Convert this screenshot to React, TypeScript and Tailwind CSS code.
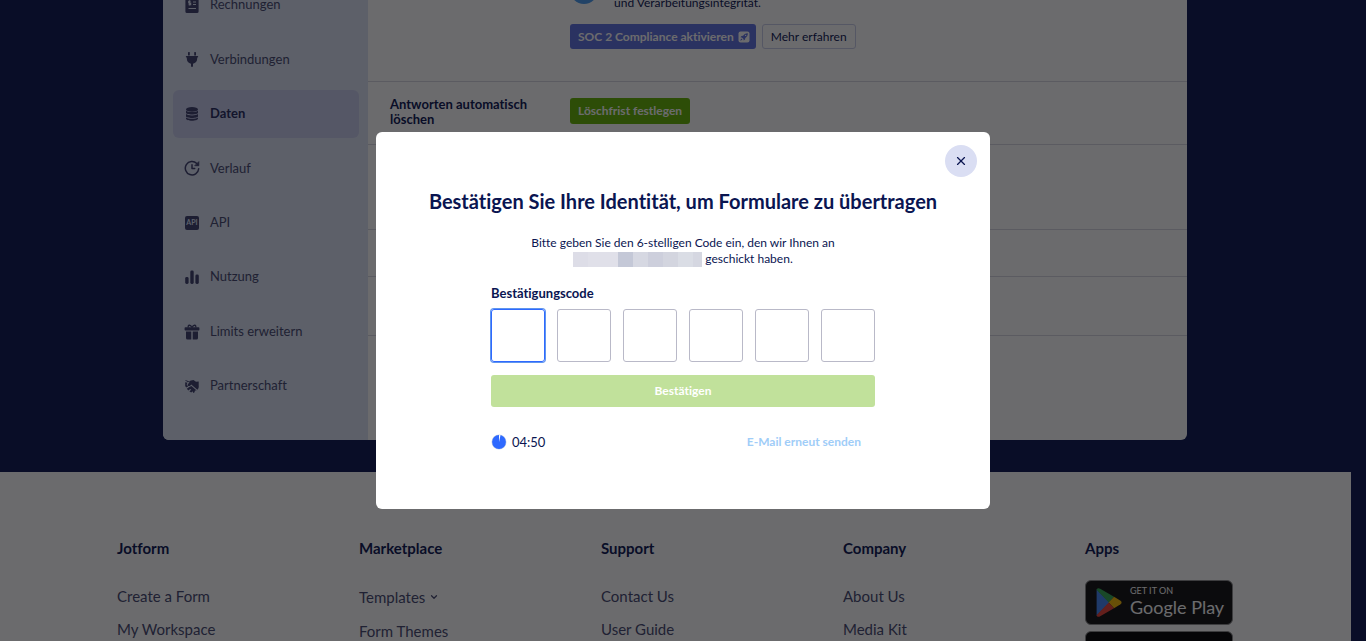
import { useRef, useState, type ReactNode } from 'react'
import { ChevronDown, X } from 'lucide-react'

const navItems: { label: string; icon: ReactNode; active?: boolean }[] = [
  { label: 'Rechnungen', icon: <InvoiceIcon /> },
  { label: 'Verbindungen', icon: <PlugIcon /> },
  { label: 'Daten', icon: <DatabaseIcon />, active: true },
  { label: 'Verlauf', icon: <HistoryIcon /> },
  { label: 'API', icon: <ApiIcon /> },
  { label: 'Nutzung', icon: <UsageIcon /> },
  { label: 'Limits erweitern', icon: <GiftIcon /> },
  { label: 'Partnerschaft', icon: <HandshakeIcon /> },
]

const footerColumns = [
  { title: 'Jotform', links: ['Create a Form', 'My Workspace'] },
  { title: 'Marketplace', links: ['Templates', 'Form Themes'] },
  { title: 'Support', links: ['Contact Us', 'User Guide'] },
  { title: 'Company', links: ['About Us', 'Media Kit'] },
]

const maskColors = ['#dddde7', '#e0e0e9', '#e0e0e9', '#c4c8d7', '#d6d8e2', '#cdcfdc', '#d3d5df', '#dadde5', '#d5d7e1']

function InvoiceIcon() {
  return (
    <svg width="16" height="16" viewBox="0 0 16 16">
      <path fill="currentColor" d="M3 0h10a1.6 1.6 0 0 1 1.6 1.6v12.800A1.6 1.6 0 0 1 13 16H3a1.600 1.600 0 0 1-1.600-1.600V1.600A1.600 1.600 0 0 1 3 0z" />
      <path fill="none" stroke="#dce3f5" strokeWidth="1.100" d="M6.700 4.300H4.700v1.700h2v1.700H4.500M5.600 3.300v5.300M9 5h3M9 7.500h3M4.500 11.500h7.500" />
    </svg>
  )
}

function PlugIcon() {
  return (
    <svg width="16" height="16" viewBox="0 0 16 16" fill="currentColor">
      <rect x="4" y="1" width="1.800" height="3.500" rx=".6" />
      <rect x="10.200" y="1" width="1.800" height="3.500" rx=".6" />
      <path d="M2.500 5h11a.7.7 0 0 1 0 1.400h-.3v1.200c0 2.700-1.700 4.700-4.200 5.200V15a1 1 0 0 1-2 0v-2.200C4.500 12.300 2.800 10.300 2.800 7.600V6.400h-.3a.7.7 0 0 1 0-1.400z" />
    </svg>
  )
}

function DatabaseIcon() {
  return (
    <svg width="16" height="16" viewBox="0 0 16 16" fill="currentColor">
      <ellipse cx="8" cy="3.400" rx="6" ry="2.400" />
      <path d="M2 4.700c1.500 1.700 10.500 1.700 12 0v2.100c0 2.300-12 2.300-12 0z" />
      <path d="M2 8.100c1.500 1.700 10.500 1.700 12 0v2.100c0 2.300-12 2.300-12 0z" />
      <path d="M2 11.500c1.500 1.700 10.500 1.700 12 0v1c0 2.900-12 2.900-12 0z" />
    </svg>
  )
}

function HistoryIcon() {
  return (
    <svg width="16" height="16" viewBox="0 0 16 16" fill="none" stroke="currentColor" strokeWidth="1.500" strokeLinecap="round" strokeLinejoin="round">
      <path d="M12.800 3.500A6.700 6.700 0 1 0 14.700 8.800" />
      <path d="M8 4.800v3.700h2.700" />
      <path fill="currentColor" strokeWidth=".8" d="M14.800 2v3.700h-3.700z" />
    </svg>
  )
}

function ApiIcon() {
  return (
    <svg width="16" height="16" viewBox="0 0 16 16">
      <rect x="1" y="1" width="14" height="14" rx="2" fill="currentColor" />
      <text x="8" y="10.400" textAnchor="middle" fontSize="7" fontWeight="700" fill="#dce3f5">API</text>
    </svg>
  )
}

function UsageIcon() {
  return (
    <svg width="16" height="16" viewBox="0 0 16 16" fill="currentColor">
      <rect x="1.200" y="8" width="3.400" height="7" rx="1.400" />
      <rect x="6.300" y="1.500" width="3.400" height="13.500" rx="1.400" />
      <rect x="11.400" y="5.500" width="3.400" height="9.500" rx="1.400" />
    </svg>
  )
}

function GiftIcon() {
  return (
    <svg width="16" height="16" viewBox="0 0 16 16">
      <path fill="none" stroke="currentColor" strokeWidth="1.300" d="M8 3.500C6.500.2 3.500.8 4.300 3.500M8 3.500C9.500.2 12.500.8 11.700 3.500" />
      <path fill="currentColor" d="M1.400 3.200h13.200a.8.800 0 0 1 .8.800v1.700a.8.800 0 0 1-.8.800H1.400a.8.800 0 0 1-.8-.8V4a.8.800 0 0 1 .8-.8zM2 7.500h5.300v8H3.500A1.500 1.500 0 0 1 2 14zM8.700 7.500H14V14a1.500 1.500 0 0 1-1.500 1.500H8.700z" />
    </svg>
  )
}

function HandshakeIcon() {
  return (
    <svg width="16" height="16" viewBox="0 0 16 16" fill="currentColor">
      <path d="M1.300 2.600 4 4.200l2-.9-2.700 3.900c1 1.300 2.800 1.200 3.900-.7l6.200 5.200c1.300-1.200 1.500-2.700 1.300-4.400V3.500L12 3.800 9.500 2 7 2.500 4.800 3.300 1.300 2z" />
      <path d="M1.200 4.200v4l1.400 1.400 1.700-1.300C2.500 7.600 2.300 6.500 3.500 4.800z" />
      <path d="m5.200 8.900-2.400 1.800 1.500 1.700 1.900-1.500 1.100.8-1.900 1.600 1.800 1.200 1.400-1.300.6 1.800 1.400-.7.300-1.800 1.700.1-5.200-4.600z" />
    </svg>
  )
}

function RocketBadge() {
  return (
    <svg width="12" height="12" viewBox="0 0 12 12">
      <rect x=".5" y=".5" width="11" height="11" rx="2" fill="#fff" />
      <path fill="#5d70e0" d="M9.800 2.200c-2.200-.1-3.600.8-4.700 2.500L3.500 5 2.400 6.300l1.500.2 1.600 1.600.2 1.500L7 8.500l.3-1.600c1.700-1.100 2.600-2.500 2.500-4.700zM3.200 7.500l-1 2.300 2.300-1z" />
      <circle cx="7.600" cy="4.400" r=".7" fill="#fff" />
    </svg>
  )
}

function Sidebar() {
  return (
    <nav className="w-[205px] shrink-0 bg-[#dce3f5] px-2.5 pt-px pb-[30px]">
      <ul className="flex h-full flex-col justify-between">
        {navItems.map(item => (
          <li key={item.label}>
            <a
              href="#"
              className={`flex h-12 w-[186px] items-center gap-2.5 rounded-md px-[11px] text-[13px] ${item.active ? 'bg-[#c9cdee] font-bold text-[#25295c]' : 'text-[#44486f]'}`}
            >
              <span className="text-[#3c3f6c]">{item.icon}</span>
              {item.label}
            </a>
          </li>
        ))}
      </ul>
    </nav>
  )
}

function SettingsCard() {
  return (
    <div className="shrink-0 pr-px">
      <div className="mx-auto -mt-5 flex w-full max-w-[1024px] overflow-hidden rounded-md bg-white">
        <Sidebar />
        <main className="flex-1 divide-y divide-[#d8d8e0]">
          <section className="h-[102px] pl-[202px]">
            <div className="flex h-6 items-start gap-4 text-[12px]">
              <span className="h-6 w-7 shrink-0 rounded-b-full bg-[#4a9cf0]" />
              <p className="pt-[15px] leading-4">und Verarbeitungsintegrität.</p>
            </div>
            <div className="mt-5 flex gap-1.5 text-[12px]">
              <button className="flex h-[25px] items-center gap-1 rounded-[3px] bg-[#5d70e0] pr-1.5 pl-2 font-bold whitespace-nowrap text-white">
                SOC 2 Compliance aktivieren
                <RocketBadge />
              </button>
              <button className="h-[25px] rounded-[3px] border border-[#c8cce8] px-2 whitespace-nowrap">Mehr erfahren</button>
            </div>
          </section>
          <section className="flex h-[63px] pl-[22px]">
            <h3 className="w-[180px] pt-[15px] pr-4 text-[13px] leading-[15px] font-bold">Antworten automatisch löschen</h3>
            <button className="mt-4 h-[26px] rounded-[3px] bg-[#64b500] px-2 text-[12px] font-bold text-white">Löschfrist festlegen</button>
          </section>
          <section className="h-[85px]" />
          <section className="h-[47px]" />
          <section className="h-[59px]" />
          <section className="h-[104px]" />
        </main>
      </div>
    </div>
  )
}

function GooglePlayBadge() {
  return (
    <a href="#" className="flex h-[45px] w-[148px] items-center gap-2 rounded-md border border-[#8c8c8c] bg-[#101010] pl-2.5 text-white">
      <svg width="26" height="29" viewBox="0 0 26 29" className="shrink-0">
        <path fill="#4285f4" d="M.6 1.300v26.400L13.500 14.500z" />
        <path fill="#34a853" d="M.6 1.800C1 .2 2.500-.2 4.200.8L18 8.800l-5 6z" />
        <path fill="#fbbc04" d="m18 8.800 6.500 3.900c1.400.9 1.400 2.700 0 3.600L18 20.200l-5.300-5.700z" />
        <path fill="#ea4335" d="M.6 27.200c.4 1.600 1.900 2 3.600 1L18 20.200l-5.300-5.700z" />
      </svg>
      <span className="flex flex-col pb-1">
        <span className="text-[9px] leading-3">GET IT ON</span>
        <span className="text-[18px] leading-5 whitespace-nowrap">Google Play</span>
      </span>
    </a>
  )
}

function Footer() {
  return (
    <footer className="mt-8 flex-1 bg-white pt-[66px] pr-6 pl-[117px]">
      <div className="grid grid-cols-5 text-[15px] leading-5">
        {footerColumns.map(col => (
          <div key={col.title}>
            <h4 className="font-bold">{col.title}</h4>
            <ul className="mt-7 space-y-[13px] text-[#44486f]">
              {col.links.map(link => (
                <li key={link}>
                  {link === 'Templates' ? (
                    <a href="#" className="flex items-center gap-1 leading-[22px]">
                      {link}
                      <ChevronDown size={10} strokeWidth={3} />
                    </a>
                  ) : (
                    <a href="#" className="block">{link}</a>
                  )}
                </li>
              ))}
            </ul>
          </div>
        ))}
        <div>
          <h4 className="font-bold">Apps</h4>
          <div className="mt-[22px] space-y-1.5">
            <GooglePlayBadge />
            <a href="#" aria-label="App Store" className="block h-[45px] w-[148px] rounded-md border border-[#8c8c8c] bg-black" />
          </div>
        </div>
      </div>
    </footer>
  )
}

function VerifyDialog() {
  const [code, setCode] = useState<string[]>(Array(6).fill(''))
  const inputs = useRef<(HTMLInputElement | null)[]>([])

  const handleChange = (i: number, value: string) => {
    const digit = value.replace(/\D/g, '').slice(-1)
    setCode(code.map((c, n) => (n === i ? digit : c)))
    if (digit && i < 5) inputs.current[i + 1]?.focus()
  }

  const next = Math.max(code.findIndex(c => !c), 0)

  return (
    <div role="dialog" aria-modal="true" aria-labelledby="verify-title" className="relative w-full max-w-[614px] rounded-md bg-white px-8 pt-[55px] pb-14">
      <button aria-label="Schließen" className="absolute top-[13px] right-[13px] flex size-8 items-center justify-center rounded-full bg-[#dadef3]">
        <X size={14} strokeWidth={2} />
      </button>

      <h2 id="verify-title" className="text-center text-[20px] leading-7 font-bold">
        Bestätigen Sie Ihre Identität, um Formulare zu übertragen
      </h2>
      <div className="mt-5 text-center text-[12px] leading-4">
        <p>Bitte geben Sie den 6-stelligen Code ein, den wir Ihnen an</p>
        <p className="flex items-center justify-center gap-[3px]">
          <span className="flex h-[15px] w-[129px] overflow-hidden">
            {maskColors.map((color, i) => (
              <span key={i} className="h-full w-[15px] shrink-0" style={{ backgroundColor: color }} />
            ))}
          </span>
          geschickt haben.
        </p>
      </div>

      <form className="mx-auto mt-[18px] max-w-[384px]" onSubmit={e => e.preventDefault()}>
        <label htmlFor="code-0" className="block text-[13px] leading-4 font-bold">Bestätigungscode</label>
        <div className="mt-2 grid grid-cols-6 gap-3">
          {code.map((value, i) => (
            <input
              key={i}
              id={`code-${i}`}
              ref={el => { inputs.current[i] = el }}
              aria-label={`Ziffer ${i + 1}`}
              inputMode="numeric"
              value={value}
              onChange={e => handleChange(i, e.target.value)}
              className={`h-[53px] w-full min-w-0 rounded-[3px] border text-center text-xl outline-none ${i === next ? 'border-[#2e69ff] ring-1 ring-[#5f95ee]' : 'border-[#b9b9c8]'}`}
            />
          ))}
        </div>
        <button className="mt-[13px] block h-8 w-full rounded-[3px] bg-[#c1e19b] text-[12px] font-bold text-white">Bestätigen</button>
        <div className="mt-6 flex items-center justify-between pr-3.5">
          <div className="flex items-center gap-[5px] text-[13px] leading-[22px]">
            <svg width="16" height="16" viewBox="0 0 16 16">
              <circle cx="8" cy="8" r="7.500" fill="#c8d4e4" />
              <circle cx="8" cy="8" r="6.900" fill="#2e69ff" />
              <path fill="#fff" d="M8 8V1a7 7 0 0 1 1.500.2z" />
            </svg>
            04:50
          </div>
          <button type="button" className="text-[12px] font-bold text-[#9fcdf8]">E-Mail erneut senden</button>
        </div>
      </form>
    </div>
  )
}

export default function App() {
  return (
    <div className="h-screen overflow-hidden bg-[#0a1551] font-[Lato,sans-serif] text-[#0a1551] [font-variant-ligatures:none]">
      <div className="flex h-full flex-col pr-[15px]">
        <SettingsCard />
        <Footer />
      </div>
      <div className="fixed inset-0 flex items-center justify-center bg-[#08080c]/60">
        <VerifyDialog />
      </div>
    </div>
  )
}
